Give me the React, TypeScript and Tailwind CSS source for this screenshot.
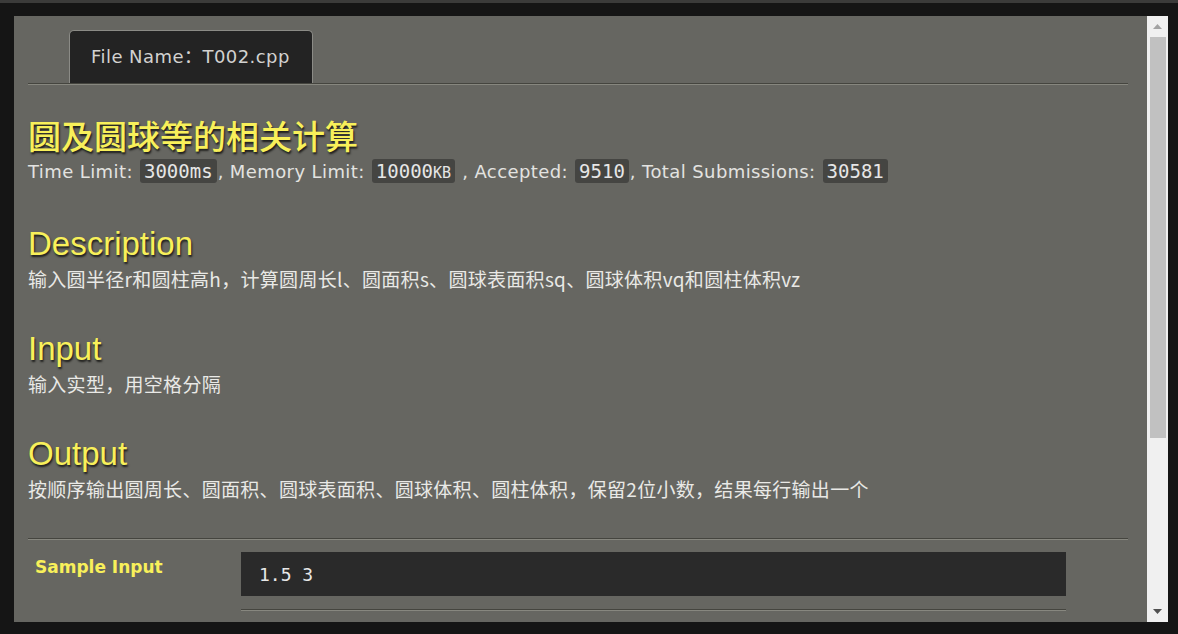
import React from "react";

const sans = "font-['DejaVu_Sans','Noto_Sans_CJK_SC',sans-serif]";
const cjk = "font-['Noto_Sans_CJK_SC',sans-serif]";
const mono = "font-['DejaVu_Sans_Mono','Liberation_Mono',monospace]";

const Badge: React.FC<{ children: React.ReactNode }> = ({ children }) => (
  <span className={`${mono} mx-[1px] rounded-[3px] bg-[#454542] px-[4px] py-[1px] text-[19px] tracking-normal text-[#e6e6e6]`}>
    {children}
  </span>
);

const Divider: React.FC<{ className?: string }> = ({ className = "" }) => (
  <div className={`h-[2px] border-t border-b border-t-[#45453f] border-b-[#87877f] ${className}`} />
);

const Section: React.FC<{ title: string; text: string }> = ({ title, text }) => (
  <div>
    <h2 className="font-['Liberation_Sans',Arial,sans-serif] text-[33px] leading-[38px] text-[#f8f05a] [text-shadow:1px_2px_2px_#1c1c1a]">
      {title}
    </h2>
    <p className={`${cjk} mt-[3px] text-[19px] leading-[26px] tracking-[0.3px] text-[#e9e9e6]`}>{text}</p>
  </div>
);

export default function App() {
  return (
    <div className="flex h-screen w-full flex-col overflow-hidden bg-[#151515]">
      <div className="h-[3px] bg-[#3b3b3a]" />
      <div className="flex flex-1 overflow-hidden pb-[12px] pl-[14px] pr-[10px] pt-[13px]">
        <div className="flex-1 overflow-hidden bg-[#666661] pl-[14px] pr-[19px] pt-[14px]">
          {/* tab */}
          <div className="pl-[41px]">
            <div className={`${sans} flex h-[53px] w-[244px] items-center rounded-t-[5px] border border-b-0 border-[#8b8b86] bg-[#232323] pb-[2px] pl-[21px] text-[18px] tracking-[0.45px] text-[#d2d2d0]`}>
              File Name：T002.cpp
            </div>
          </div>
          <Divider />

          <h1 className={`${cjk} mt-[31px] text-[33px] font-medium leading-[38px] text-[#f8f05a] [text-shadow:1px_2px_2px_#1c1c1a]`}>
            圆及圆球等的相关计算
          </h1>
          <p className={`${sans} mt-[5px] text-[18px] leading-[24px] tracking-[0.4px] text-[#e3e3e0]`}>
            Time Limit: <Badge>3000ms</Badge>, Memory Limit: <Badge>10000<span className="text-[15px]">KB</span></Badge> , Accepted:{" "}
            <Badge>9510</Badge>, Total Submissions: <Badge>30581</Badge>
          </p>

          <div className="mt-[40px]">
            <Section title="Description" text="输入圆半径r和圆柱高h，计算圆周长l、圆面积s、圆球表面积sq、圆球体积vq和圆柱体积vz" />
          </div>
          <div className="mt-[38px]">
            <Section title="Input" text="输入实型，用空格分隔" />
          </div>
          <div className="mt-[38px]">
            <Section title="Output" text="按顺序输出圆周长、圆面积、圆球表面积、圆球体积、圆柱体积，保留2位小数，结果每行输出一个" />
          </div>

          <Divider className="mt-[36px]" />

          <div className="mt-[12px] flex">
            <div className={`${sans} w-[213px] pl-[7px] pt-[3px] text-[17px] font-bold leading-[24px] text-[#f8f05a]`}>
              Sample Input
            </div>
            <div className="w-[825px]">
              <div className={`${mono} flex h-[44px] items-center bg-[#2a2a2a] pl-[18px] text-[18px] text-[#e8e8e8]`}>
                1.5 3
              </div>
              <Divider className="mt-[13px]" />
            </div>
          </div>
        </div>

        {/* scrollbar */}
        <div className="flex w-[21px] flex-col items-center bg-[#f0f0f0]">
          <div className="flex h-[21px] items-center justify-center">
            <svg width="9" height="5" viewBox="0 0 9 5">
              <path d="M0 5 L4.5 0 L9 5 Z" fill="#a3a3a3" />
            </svg>
          </div>
          <div className="h-[401px] w-[16px] bg-[#c1c1c1]" />
          <div className="flex-1" />
          <div className="flex h-[21px] items-center justify-center">
            <svg width="9" height="5" viewBox="0 0 9 5">
              <path d="M0 0 L9 0 L4.5 5 Z" fill="#505050" />
            </svg>
          </div>
        </div>
      </div>
    </div>
  );
}
